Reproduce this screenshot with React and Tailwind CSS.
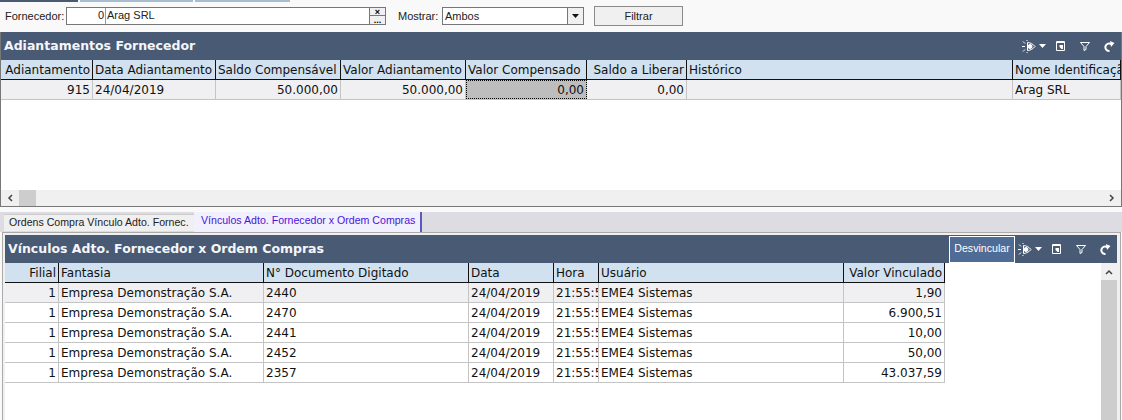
const UI = "font-['Liberation_Sans',Arial,sans-serif]"
const GRID = "font-['DejaVu_Sans',Verdana,sans-serif]"

const TOP_COLS = [
  { label: 'Adiantamento', value: '915', w: 'w-[92px]', right: true },
  { label: 'Data Adiantamento', value: '24/04/2019', w: 'w-[123px]' },
  { label: 'Saldo Compensável', value: '50.000,00', w: 'w-[125px]', right: true, headLeft: true },
  { label: 'Valor Adiantamento', value: '50.000,00', w: 'w-[125px]', right: true, headLeft: true },
  { label: 'Valor Compensado', value: '0,00', w: 'w-[121px]', right: true, headLeft: true, focus: true },
  { label: 'Saldo a Liberar', value: '0,00', w: 'w-[100px]', right: true },
  { label: 'Histórico', value: '', w: 'w-[326px]' },
  { label: 'Nome Identificação', value: 'Arag SRL', w: 'flex-1' },
]

const LINK_COLS = [
  { label: 'Filial', key: 'filial', w: 'w-[54px]', right: true },
  { label: 'Fantasia', key: 'fantasia', w: 'w-[205px]' },
  { label: 'N° Documento Digitado', key: 'doc', w: 'w-[205px]' },
  { label: 'Data', key: 'data', w: 'w-[85px]' },
  { label: 'Hora', key: 'hora', w: 'w-[45px]' },
  { label: 'Usuário', key: 'user', w: 'w-[245px]' },
  { label: 'Valor Vinculado', key: 'valor', w: 'w-[101px]', right: true },
]

const LINKS = [
  { doc: '2440', valor: '1,90' },
  { doc: '2470', valor: '6.900,51' },
  { doc: '2441', valor: '10,00' },
  { doc: '2452', valor: '50,00' },
  { doc: '2357', valor: '43.037,59' },
].map((r) => ({
  ...r,
  filial: '1',
  fantasia: 'Empresa Demonstração S.A.',
  data: '24/04/2019',
  hora: '21:55:59',
  user: 'EME4 Sistemas',
}))

function PanelIcons() {
  return (
    <div className="flex items-center text-white">
      <svg width="14" height="13" viewBox="0 0 14 13" fill="none" stroke="currentColor" strokeWidth="1">
        <path d="M0 6.500h3M1 1.500l2 2M1 11.500l2-2M5 0v1M5 12v1" />
        <path d="M5.500 2.500c3 0 6 2 7.500 4-1.500 2-4.500 4-7.500 4z" />
        <circle cx="8" cy="6.500" r="2" fill="currentColor" />
      </svg>
      <svg className="ml-[3px]" width="7" height="4" viewBox="0 0 7 4"><path d="M0 0h7L3.500 4z" fill="currentColor" /></svg>
      <svg className="ml-[10px]" width="9" height="10" viewBox="0 0 9 10" fill="none" stroke="currentColor">
        <path d="M.5.500h8v9h-8zM.5 1.500h8" />
        <path d="M3.500 4H7v4H5.500L3.500 6z" fill="currentColor" stroke="none" />
      </svg>
      <svg className="ml-[15px]" width="10" height="9" viewBox="0 0 10 9" fill="none" stroke="currentColor">
        <path d="M.5.500h9L6 4.500v3l-2 1v-4z" />
      </svg>
      <svg className="ml-[14px]" width="11" height="11" viewBox="0 0 11 11" fill="none" stroke="currentColor" strokeWidth="2">
        <path d="M7.500 3.200A3.800 3.800 0 1 0 5.500 10" />
        <path d="M6 0 L10.500 2 L7 6z" fill="currentColor" stroke="none" />
      </svg>
    </div>
  )
}

function PanelTitle({ title, children }) {
  return (
    <div className="flex h-7 items-center justify-between bg-[#495a74] pr-[6px]">
      <span className={`${GRID} pl-[3px] text-[12.5px] font-bold text-[#f4f6fa]`}>{title}</span>
      <div className="flex items-center">{children}<PanelIcons /></div>
    </div>
  )
}

function HeadCell({ col }) {
  return (
    <div className={`${col.w} flex h-full shrink-0 items-center overflow-hidden whitespace-nowrap border-r border-[#111] px-[2px] pt-[1px] ${col.right && !col.headLeft ? 'justify-end' : ''}`}>
      {col.label}
    </div>
  )
}

function Cell({ col, value }) {
  return (
    <div className={`${col.w} flex h-full shrink-0 items-center overflow-hidden whitespace-nowrap border-r border-[#c4c4c4] px-[2px] pt-[1px] ${col.right ? 'justify-end' : ''} ${col.focus ? 'bg-[#bdbdbd] outline-1 -outline-offset-1 outline-dotted outline-black' : ''}`}>
      {value}
    </div>
  )
}

export default function App() {
  return (
    <div className={`${UI} flex h-[420px] w-[1122px] flex-col overflow-hidden bg-[#f9f9f9] text-[11px] text-[#222]`}>
      <div className="flex h-[2px] shrink-0">
        <div className="w-[78px] bg-[#495a74]" />
        <div className="ml-[2px] w-[113px] bg-[#a9bdd2]" />
        <div className="ml-[2px] w-[95px] bg-[#a9bdd2]" />
      </div>

      <div className="flex h-[30px] shrink-0 items-center pb-[2px] pl-[5px]">
        <span className="w-[61px]">Fornecedor:</span>
        <div className="flex h-[18px] w-[304px] border border-[#777] bg-white">
          <div className="w-[39px] border-r border-[#999] pr-[1px] text-right leading-[14px]">0</div>
          <div className="flex-1 pl-[1px] leading-[14px]">Arag SRL</div>
        </div>
        <div className="flex h-[18px] w-[16px] flex-col border-y border-r border-[#777] bg-[#f0f0f0] text-center text-[9px] font-bold leading-[8px] text-black">
          <div className="h-[8px] border-b border-[#777]">×</div>
          <div className="flex-1">...</div>
        </div>
        <span className="ml-[12px] w-[44px]">Mostrar:</span>
        <div className="flex h-[18px] w-[142px] border border-[#777] bg-white">
          <div className="flex-1 pl-[2px] leading-[16px]">Ambos</div>
          <div className="flex w-[16px] items-center justify-center border-l border-[#777] bg-[#f0f0f0]">
            <svg width="7" height="4" viewBox="0 0 7 4"><path d="M0 0h7L3.500 4z" fill="#111" /></svg>
          </div>
        </div>
        <button className="ml-[10px] h-[20px] w-[89px] border border-[#8a8a8a] bg-[#f0f0f0]">Filtrar</button>
      </div>

      <div className="flex h-[175px] shrink-0 flex-col border-x border-b border-[#777] bg-white">
        <PanelTitle title="Adiantamentos Fornecedor" />
        <div className={`${GRID} flex h-[20px] border-b border-[#111] bg-[#d1e1ef] text-[12px] text-[#111]`}>
          {TOP_COLS.map((c) => <HeadCell key={c.label} col={c} />)}
        </div>
        <div className={`${GRID} flex h-[20px] border-b border-[#c4c4c4] bg-[#f0f0f2] text-[12px] text-[#111]`}>
          {TOP_COLS.map((c) => <Cell key={c.label} col={c} value={c.value} />)}
        </div>
        <div className="flex-1" />
        <div className="flex h-[16px] items-center bg-[#f0f0f0]">
          <svg className="ml-[6px]" width="6" height="8" viewBox="0 0 6 8" fill="none" stroke="#444" strokeWidth="1.500"><path d="M5 1 2 4l3 3" /></svg>
          <div className="ml-[6px] h-full w-[17px] bg-[#cdcdcd]" />
          <svg className="ml-auto mr-[6px]" width="6" height="8" viewBox="0 0 6 8" fill="none" stroke="#444" strokeWidth="1.500"><path d="m1 1 3 3-3 3" /></svg>
        </div>
      </div>

      <div className="flex h-[25px] shrink-0 items-end pt-[5px]">
        <div className="flex h-[20px] flex-1 items-end bg-[#dcdce2] pl-[4px] text-[10.6px]">
          <div className="mb-[1px] flex h-[17px] w-[190px] items-center whitespace-nowrap border-t border-[#ccc] bg-[#f0f0f0] pb-[1px] pl-[5px]">Ordens Compra Vínculo Adto. Fornec.</div>
          <div className="flex h-[20px] w-[228px] items-center whitespace-nowrap border-r-2 border-[#5b5bbd] bg-[#f0f0ff] pb-[2px] pl-[7px] text-[#4b14d8]">Vínculos Adto. Fornecedor x Ordem Compras</div>
        </div>
      </div>

      <div className="ml-[2px] mr-[1px] min-h-0 flex-1 border-x border-t border-[#aaa] bg-[#f0f0f0] pl-[2px] pr-[3px] pt-[2px]">
        <PanelTitle title="Vínculos Adto. Fornecedor x Ordem Compras">
          <div className="mr-[3px] flex h-[27px] w-[66px] items-center justify-center border border-white bg-[#4f6c96] text-[10.6px] text-white">Desvincular</div>
        </PanelTitle>
        <div className="flex h-[160px] bg-white">
          <div className="w-[940px]">
            <div className={`${GRID} flex h-[20px] border-b border-[#111] bg-[#d1e1ef] text-[12px] text-[#111]`}>
              {LINK_COLS.map((c) => <HeadCell key={c.key} col={c} />)}
            </div>
            {LINKS.map((row, i) => (
              <div key={row.doc} className={`${GRID} flex h-[20px] border-b border-[#c4c4c4] text-[12px] text-[#111] ${i === 0 ? 'bg-[#f0f0f2]' : 'bg-white'}`}>
                {LINK_COLS.map((c) => <Cell key={c.key} col={c} value={row[c.key]} />)}
              </div>
            ))}
          </div>
          <div className="ml-auto flex w-[16px] flex-col bg-[#f0f0f0]">
            <div className="flex h-[17px] items-center justify-center">
              <svg width="8" height="6" viewBox="0 0 8 6" fill="none" stroke="#444" strokeWidth="1.500"><path d="M1 5 4 2l3 3" /></svg>
            </div>
            <div className="flex-1 bg-[#cdcdcd]" />
          </div>
        </div>
      </div>
    </div>
  )
}
